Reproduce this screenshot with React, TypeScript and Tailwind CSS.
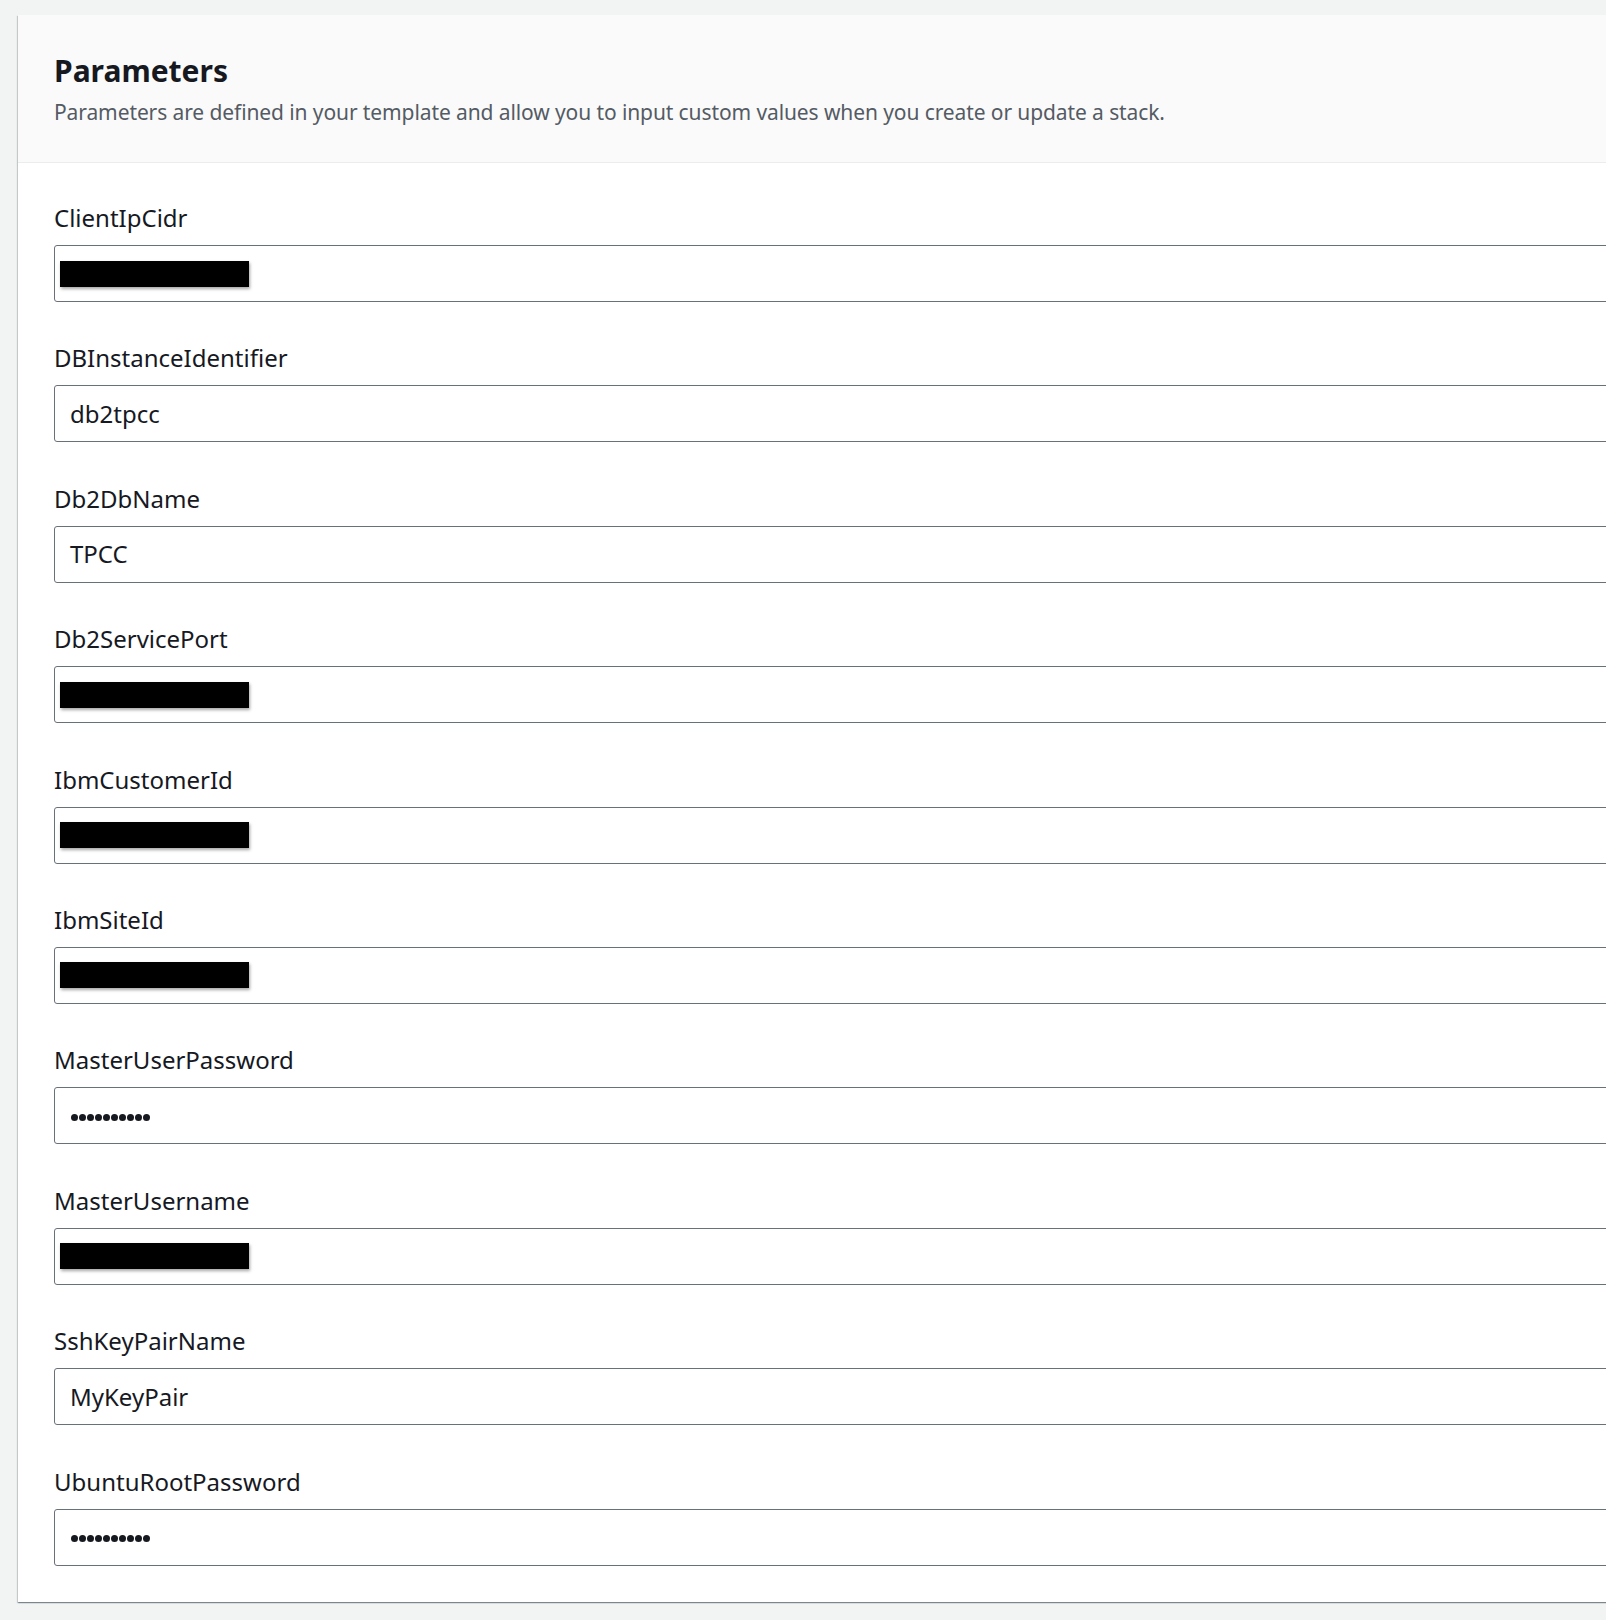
const params: { name: string; value?: string; redacted?: boolean; secret?: boolean }[] = [
  { name: "ClientIpCidr", redacted: true },
  { name: "DBInstanceIdentifier", value: "db2tpcc" },
  { name: "Db2DbName", value: "TPCC" },
  { name: "Db2ServicePort", redacted: true },
  { name: "IbmCustomerId", redacted: true },
  { name: "IbmSiteId", redacted: true },
  { name: "MasterUserPassword", secret: true },
  { name: "MasterUsername", redacted: true },
  { name: "SshKeyPairName", value: "MyKeyPair" },
  { name: "UbuntuRootPassword", secret: true },
];

const dots = Array.from({ length: 10 }, (_, i) => i);

function Field({ p }: { p: (typeof params)[number] }) {
  return (
    <div>
      <label className="block text-[24px] leading-[30px] text-[#16191f]">{p.name}</label>
      <div className="mt-[12px] flex h-[57px] items-center rounded-[3px] border border-[#687078] bg-white">
        {p.redacted && (
          <div className="ml-[5px] h-[26px] w-[189px] bg-black shadow-[1px_2px_3px_rgba(0,0,0,0.35)]" />
        )}
        {p.value && (
          <span className="pl-[15px] text-[24px] leading-[30px] text-[#16191f]">{p.value}</span>
        )}
        {p.secret && (
          // masked password
          <span className="ml-[16px] mt-[3px] flex gap-[1.2px]" aria-label="password">
            {dots.map((i) => (
              <span key={i} className="h-[6.8px] w-[6.8px] rounded-full bg-[#16191f]" />
            ))}
          </span>
        )}
      </div>
    </div>
  );
}

export default function App() {
  return (
    <div className="min-h-[1620px] w-full overflow-hidden bg-[#f2f3f3] pl-[18px] pt-[15px] font-['Noto_Sans',sans-serif]">
      <section className="w-[1700px] bg-white shadow-[0_1px_1px_0_rgba(0,28,36,0.3),1px_1px_1px_0_rgba(0,28,36,0.15),-1px_1px_1px_0_rgba(0,28,36,0.15)]">
        <div className="border-b border-[#eaeded] bg-[#fafafa] pb-[35px] pl-[36px] pt-[36px]">
          <h2 className="text-[30px] font-bold leading-[40px] text-[#16191f]">Parameters</h2>
          <p className="mt-[6px] text-[21px] leading-[30px] tracking-[-0.1px] text-[#545b64]">
            Parameters are defined in your template and allow you to input custom values when you create or update a stack.
          </p>
        </div>
        <div className="flex flex-col gap-[41.4px] pb-[36px] pl-[36px] pt-[40px]">
          {params.map((p) => (
            <Field key={p.name} p={p} />
          ))}
        </div>
      </section>
    </div>
  );
}
